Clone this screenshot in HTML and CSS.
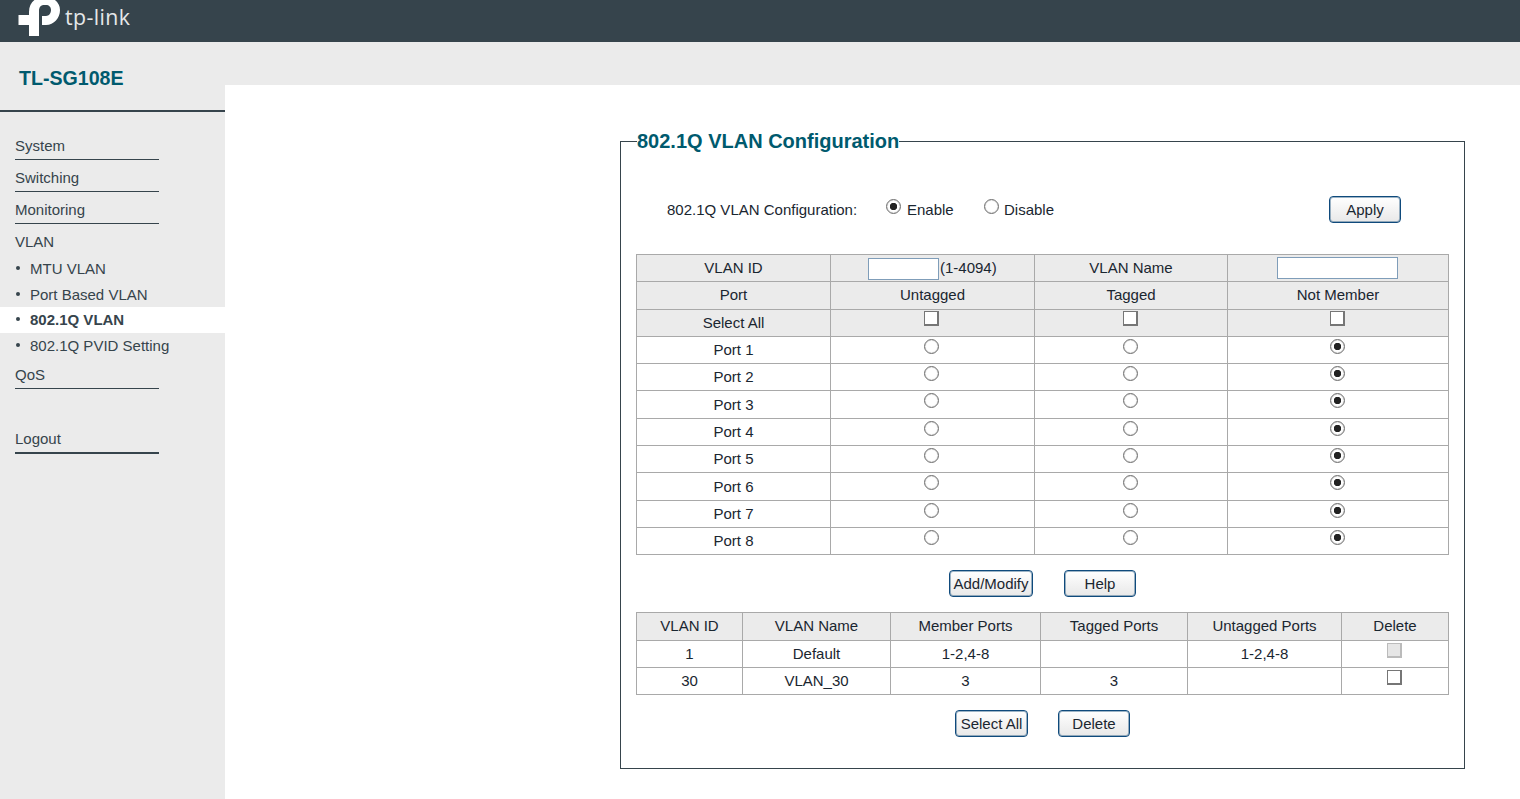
FILE: index.html
```html
<!DOCTYPE html>
<html lang="en">
<head>
<meta charset="utf-8">
<title>TL-SG108E</title>
<link rel="stylesheet" href="styles.css">
</head>
<body>
<header class="topbar">
  <svg class="logo" width="134" height="42" viewBox="0 0 134 42" aria-label="tp-link">
    <path class="logo-mark" d="M29 15V12C29 3 35-3 44-3H46C54-3 60 3 60 10C60 18 54 25 46 25H42V16H46C49 16 51 13 51 10C51 7 49 5 46 5H44C41 5 39 7 39 11V36H29V25H18.5V15Z"/>
    <text class="logo-text" x="65" y="25">tp-link</text>
  </svg>
</header>
<div class="page">
  <aside class="sidebar">
    <div class="model">TL-SG108E</div>
    <nav class="menu">
      <a class="item">System</a>
      <a class="item">Switching</a>
      <a class="item">Monitoring</a>
      <a class="item item-open">VLAN</a>
      <a class="sub">MTU VLAN</a>
      <a class="sub">Port Based VLAN</a>
      <a class="sub sub-active">802.1Q VLAN</a>
      <a class="sub">802.1Q PVID Setting</a>
      <a class="item item-qos">QoS</a>
      <a class="item item-logout">Logout</a>
    </nav>
  </aside>
  <div class="main">
    <div class="strip"></div>
    <div class="content">
      <fieldset class="panel">
        <legend class="panel-title">802.1Q VLAN Configuration</legend>
        <div class="state-row">
          <span class="state-label">802.1Q VLAN Configuration:</span>
          <label class="state-opt state-enable"><input type="radio" name="state" checked>Enable</label>
          <label class="state-opt state-disable"><input type="radio" name="state">Disable</label>
          <button class="btn btn-apply" type="button">Apply</button>
        </div>
        <table class="grid config">
          <colgroup><col class="c1"><col class="c2"><col class="c3"><col class="c4"></colgroup>
          <tr class="head">
            <td>VLAN ID</td>
            <td class="id-cell"><input class="text id-input" type="text"><span class="range">(1-4094)</span></td>
            <td>VLAN Name</td>
            <td><input class="text name-input" type="text"></td>
          </tr>
          <tr class="head"><td>Port</td><td>Untagged</td><td>Tagged</td><td>Not Member</td></tr>
          <tr class="head"><td>Select All</td><td><input type="checkbox"></td><td><input type="checkbox"></td><td><input type="checkbox"></td></tr>
          <tr><td>Port 1</td><td><input type="radio" name="p1"></td><td><input type="radio" name="p1"></td><td><input type="radio" name="p1" checked></td></tr>
          <tr><td>Port 2</td><td><input type="radio" name="p2"></td><td><input type="radio" name="p2"></td><td><input type="radio" name="p2" checked></td></tr>
          <tr><td>Port 3</td><td><input type="radio" name="p3"></td><td><input type="radio" name="p3"></td><td><input type="radio" name="p3" checked></td></tr>
          <tr><td>Port 4</td><td><input type="radio" name="p4"></td><td><input type="radio" name="p4"></td><td><input type="radio" name="p4" checked></td></tr>
          <tr><td>Port 5</td><td><input type="radio" name="p5"></td><td><input type="radio" name="p5"></td><td><input type="radio" name="p5" checked></td></tr>
          <tr><td>Port 6</td><td><input type="radio" name="p6"></td><td><input type="radio" name="p6"></td><td><input type="radio" name="p6" checked></td></tr>
          <tr><td>Port 7</td><td><input type="radio" name="p7"></td><td><input type="radio" name="p7"></td><td><input type="radio" name="p7" checked></td></tr>
          <tr><td>Port 8</td><td><input type="radio" name="p8"></td><td><input type="radio" name="p8"></td><td><input type="radio" name="p8" checked></td></tr>
        </table>
        <div class="actions actions-mid">
          <button class="btn btn-add" type="button">Add/Modify</button>
          <button class="btn btn-help" type="button">Help</button>
        </div>
        <table class="grid list">
          <colgroup><col class="l1"><col class="l2"><col class="l3"><col class="l4"><col class="l5"><col class="l6"></colgroup>
          <tr class="head"><td>VLAN ID</td><td>VLAN Name</td><td>Member Ports</td><td>Tagged Ports</td><td>Untagged Ports</td><td>Delete</td></tr>
          <tr><td>1</td><td>Default</td><td>1-2,4-8</td><td></td><td>1-2,4-8</td><td><input type="checkbox" disabled></td></tr>
          <tr><td>30</td><td>VLAN_30</td><td>3</td><td>3</td><td></td><td><input type="checkbox"></td></tr>
        </table>
        <div class="actions actions-end">
          <button class="btn btn-select" type="button">Select All</button>
          <button class="btn btn-delete" type="button">Delete</button>
        </div>
      </fieldset>
    </div>
  </div>
</div>
</body>
</html>
```
FILE: styles.css
```css
* { box-sizing: border-box; }
html, body { margin: 0; height: 100%; overflow: hidden; }
body {
  font-family: "Liberation Sans", Arial, sans-serif;
  font-size: 15px;
  color: #1a2630;
  background: #fff;
  display: flex;
  flex-direction: column;
}
.topbar { height: 42px; flex: none; background: #36444c; }
.logo { display: block; }
.logo-mark { fill: #fff; }
.logo-text { font-family: "Open Sans", sans-serif; font-size: 21.3px; font-weight: 500; letter-spacing: .4px; fill: #e6e8e9; }
.page { flex: 1; display: flex; min-height: 0; }

.sidebar { width: 225px; flex: none; background: #ebebeb; }
.model {
  height: 70px;
  padding: 25px 0 0 19px;
  font-size: 19.6px;
  line-height: 23px;
  font-weight: 700;
  color: #005a6e;
  border-bottom: 2px solid #36444c;
}
.menu { display: flex; flex-direction: column; padding-top: 22px; color: #36444c; }
.item {
  display: block;
  flex: none;
  width: 144px;
  height: 26px;
  margin: 0 0 6px 15px;
  padding-top: 2px;
  line-height: 20px;
  border-bottom: 1px solid #36444c;
}
.item-open { border-bottom: 0; margin-bottom: 0; }
.item-qos { margin-top: 3px; height: 27px; padding-top: 3px; margin-bottom: 0; }
.item-logout { margin-top: 37px; height: 28px; padding-top: 3px; border-bottom-width: 2px; }
.sub {
  position: relative;
  display: block;
  flex: none;
  height: 25.7px;
  padding-left: 30px;
  line-height: 25px;
}
.sub::before {
  content: "";
  position: absolute;
  left: 16px;
  top: 10px;
  width: 4px;
  height: 4px;
  border-radius: 50%;
  background: #36444c;
}
.sub-active { background: #fff; font-weight: 700; }

.main { flex: 1; min-width: 0; display: flex; flex-direction: column; }
.strip { height: 43px; flex: none; background: #ebebeb; }
.content { padding: 43px 55px 0 395px; }
.panel {
  margin: 0;
  height: 641px;
  padding: 0 15px;
  border: 1px solid #36444c;
  min-width: 0;
}
.panel-title {
  padding: 0;
  margin-left: 1px;
  font-size: 20px;
  line-height: 26px;
  font-weight: 700;
  color: #005a6e;
}
.state-row { display: flex; align-items: center; height: 40px; margin-top: 35px; }
.state-label { margin-left: 31px; width: 219px; }
.state-opt { display: flex; align-items: center; }
.state-opt input[type="radio"] { margin: -6px 6px 0 0; }
.state-enable { width: 98px; }
.state-disable { width: 345px; }
.state-disable input[type="radio"] { margin-right: 5px; }

input[type="radio"], input[type="checkbox"] {
  appearance: none;
  margin: 0;
  display: inline-block;
  flex: none;
  width: 15px;
  height: 15px;
  vertical-align: middle;
  background: #fff;
}
input[type="radio"] { border: 1px solid #6f6f6f; border-radius: 50%; box-shadow: inset 0 0 1px #767676; }
input[type="radio"]:checked { background: radial-gradient(circle, #222 0 3.4px, #fff 4px); }
input[type="checkbox"] { border: 1px solid #767676; border-width: 1px 2px 2px 1px; }
input[type="checkbox"]:disabled { background: #e6e6e6; border-color: #bbb; }
td > input[type="radio"] { position: relative; top: -4.5px; left: -1px; }
td > input[type="checkbox"] { position: relative; top: -5px; left: -1px; }
.list td > input[type="checkbox"] { top: -4px; }

.grid { width: 812px; border-collapse: collapse; table-layout: fixed; text-align: center; }
.grid td { padding: 0 0 1px; border: 1px solid #a9a9a9; }
.grid tr { height: 27.3px; }
.head td { background: #ebebeb; }
.config { margin-top: 25px; }
.c1 { width: 194px; } .c2 { width: 204px; } .c3 { width: 193px; } .c4 { width: 221px; }
.l1 { width: 106px; } .l2 { width: 148px; } .l3 { width: 150px; } .l4 { width: 147px; } .l5 { width: 154px; } .l6 { width: 107px; }

.text { height: 22px; padding: 0; border: 1px solid #7f9db9; background: #fff; vertical-align: top; }
.id-input { width: 71px; margin: 2px 0 0 2px; }
.name-input { width: 121px; margin-left: -2px; }
.range { display: inline-block; vertical-align: top; width: 61px; margin-right: -1px; text-align: left; padding-left: 1px; line-height: 24px; }

.btn {
  height: 27px;
  padding: 0;
  font: inherit;
  font-size: 15px;
  color: #1a2630;
  border: 1px solid #0f4a7c;
  border-radius: 4px;
  background: linear-gradient(#ffffff, #e8e8e8);
  box-shadow: inset 0 0 0 1px rgba(40, 90, 130, .45);
}
.btn-apply { width: 72px; }
.actions { display: flex; }
.actions-mid { margin-top: 15px; padding-left: 313px; gap: 31px; }
.actions-end { margin-top: 15px; padding-left: 319px; gap: 30px; }
.btn-add { width: 84px; }
.btn-help { width: 72px; }
.btn-select { width: 73px; }
.btn-delete { width: 72px; }
.list { margin-top: 15px; }
```
